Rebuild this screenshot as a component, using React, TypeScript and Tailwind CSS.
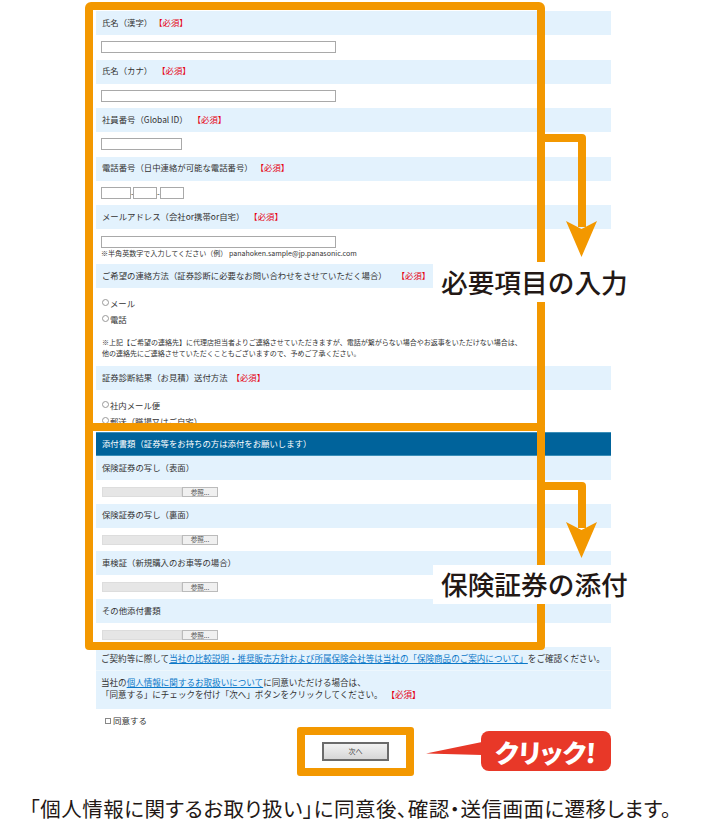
import React from "react";

const cjk = "font-['Noto_Sans_CJK_JP','Noto_Sans_CJK_SC',sans-serif]";

function Req() {
  return <span className="text-[#e60012]">【必須】</span>;
}

function Bar({ children, className = "" }: { children: React.ReactNode; className?: string }) {
  return (
    <div className={`h-[24px] bg-[#e3f2fd] flex items-center pl-[6px] pb-[2px] text-[8.4px] text-[#333] whitespace-nowrap ${className}`}>
      {children}
    </div>
  );
}

function TextField({ w }: { w: string }) {
  return <input type="text" className={`${w} h-[12px] block bg-white border border-[#a9a9a9]`} />;
}

function Radio({ label }: { label: string }) {
  return (
    <div className="flex items-center h-[16px] text-[8.4px] text-[#333]">
      <input type="radio" className="appearance-none w-[7px] h-[7px] rounded-full border border-[#999] mr-[1px] -translate-y-[1px]" />
      {label}
    </div>
  );
}

function FileRow() {
  return (
    <div className="h-[23.7px] flex items-center pl-[6px]">
      <div className="w-[80px] h-[10px] bg-[#e6e6e6] border border-[#ddd]" />
      <button className="w-[36px] h-[10px] bg-[#f0f0f0] border border-[#bbb] text-[6.5px] leading-none text-[#555] flex items-center justify-center">
        参照...
      </button>
    </div>
  );
}

function Arrow({ top, height }: { top: string; height: number }) {
  return (
    <svg
      className={`absolute left-[545px] ${top}`}
      width="54"
      height={height}
      viewBox={`0 0 54 ${height}`}
    >
      <path d={`M0 4H37V${height - 30}`} fill="none" stroke="#f39800" strokeWidth="8" strokeLinejoin="round" />
      <path d={`M21 ${height - 36}L36.5 ${height - 28}L52 ${height - 36}L36.5 ${height}Z`} fill="#f39800" />
    </svg>
  );
}

export default function App() {
  return (
    <div className={`relative w-[701px] h-[832px] overflow-hidden bg-white ${cjk}`}>
      <div className="ml-[96px] w-[515px] pt-[11px]">
        {/* Section 1 */}
        <div className="h-[412px] overflow-hidden">
          <Bar>氏名&#xFF08;漢字&#xFF09;<span className="ml-[2px]"><Req /></span></Bar>
          <div className="h-[24.5px] pl-[5px] pt-[6px]"><TextField w="w-[235px]" /></div>
          <Bar>氏名&#xFF08;カナ&#xFF09;<span className="ml-[5px]"><Req /></span></Bar>
          <div className="h-[24.5px] pl-[5px] pt-[6px]"><TextField w="w-[235px]" /></div>
          <Bar>社員番号&#xFF08;Global ID&#xFF09;<span className="ml-[5px]"><Req /></span></Bar>
          <div className="h-[24.5px] pl-[5px] pt-[6px]"><TextField w="w-[81px]" /></div>
          <Bar>電話番号&#xFF08;日中連絡が可能な電話番号&#xFF09;<span className="ml-[3px]"><Req /></span></Bar>
          <div className="h-[24.5px] pl-[5px] pt-[6px] flex items-start text-[8px] leading-[14px] text-[#333]">
            <TextField w="w-[30px]" />
            <span className="w-[2px]">-</span>
            <TextField w="w-[24px]" />
            <span className="w-[3px]">-</span>
            <TextField w="w-[24px]" />
          </div>
          <Bar>メールアドレス&#xFF08;会社or携帯or自宅&#xFF09;<span className="ml-[5px]"><Req /></span></Bar>
          <div className="h-[35px] pl-[5px] pt-[7px]">
            <TextField w="w-[235px]" />
            <p className="text-[7.05px] leading-[11px] text-[#333] whitespace-nowrap">
              ※半角英数字で入力してください&#xFF08;例&#xFF09; panahoken.sample@jp.panasonic.com
            </p>
          </div>
          <Bar>ご希望の連絡方法&#xFF08;証券診断に必要なお問い合わせをさせていただく場合&#xFF09;<span className="ml-[10px]"><Req /></span></Bar>
          <div className="h-[78px] pl-[6px] pt-[7px]">
            <Radio label="メール" />
            <Radio label="電話" />
            <p className="mt-[10px] text-[7px] leading-[11px] text-[#333] whitespace-nowrap">
              ※上記【ご希望の連絡先】に代理店担当者よりご連絡させていただきますが、電話が繋がらない場合やお返事をいただけない場合は、
              <br />
              他の連絡先にご連絡させていただくこともございますので、予めご了承ください。
            </p>
          </div>
          <Bar>証券診断結果&#xFF08;お見積&#xFF09;送付方法<span className="ml-[4px]"><Req /></span></Bar>
          <div className="pl-[6px] pt-[7px]">
            <Radio label="社内メール便" />
            <Radio label={"郵送\uFF08職場又はご自宅\uFF09"} />
          </div>
        </div>

        {/* Section 2 */}
        <div className="mt-[9px]">
          <div className="h-[24px] bg-[#00639b] flex items-center pl-[6px] pb-[2px] text-[8.4px] text-white border-y border-[#3b8fb8]">
            添付書類&#xFF08;証券等をお持ちの方は添付をお願いします&#xFF09;
          </div>
          <Bar>保険証券の写し&#xFF08;表面&#xFF09;</Bar>
          <FileRow />
          <Bar>保険証券の写し&#xFF08;裏面&#xFF09;</Bar>
          <FileRow />
          <Bar>車検証&#xFF08;新規購入のお車等の場合&#xFF09;</Bar>
          <FileRow />
          <Bar>その他添付書類</Bar>
          <FileRow />
        </div>

        {/* Agreement */}
        <div className="bg-[#e3f2fd] text-[8.55px] text-[#333]">
          <div className="h-[24px] flex items-center pl-[5px] whitespace-nowrap border-b border-[#eef7fd]">
            ご契約等に際して<a className="text-[#0b78c8] underline">当社の比較説明・推奨販売方針および所属保険会社等は当社の「保険商品のご案内について」</a>をご確認ください。
          </div>
          <div className="h-[38px] pl-[5px] pt-[5px] leading-[12px] whitespace-nowrap">
            当社の<a className="text-[#0b78c8] underline">個人情報に関するお取扱いについて</a>に同意いただける場合は、
            <br />
            「同意する」にチェックを付け「次へ」ボタンをクリックしてください。 <span className="ml-[2px]"><Req /></span>
          </div>
        </div>
        <div className="h-[24px] flex items-center pl-[9px] text-[8.5px] text-[#333]">
          <input type="checkbox" className="appearance-none w-[6px] h-[6px] border border-[#888] mr-[2px]" />
          同意する
        </div>
      </div>

      {/* Button + callout */}
      <div className="mt-[-6px] pl-[297px] flex items-center">
        <div className="w-[117px] h-[49px] border-[8px] border-[#f39800] rounded-[3px] flex items-center justify-center">
          <button className="w-[67px] h-[19px] bg-gradient-to-b from-[#f2f2f2] to-[#d6d6d6] border-2 border-[#6b6b6b] text-[7px] text-[#444]">次へ</button>
        </div>
        <svg className="ml-[12px] -translate-y-[2px]" width="56" height="14" viewBox="0 0 56 14">
          <path d="M0 11.5L56 0V13Z" fill="#e83828" />
        </svg>
        <div className="w-[130px] h-[40px] -translate-x-[1px] bg-[#e83828] rounded-[8px] flex items-center justify-center text-white text-[26px] font-black whitespace-nowrap">
          <span className="inline-block -skew-x-3 [font-feature-settings:'palt']">クリック!</span>
        </div>
      </div>

      <p className="mt-[18px] text-center text-[20.5px] tracking-[0.5px] leading-[28px] text-[#231815] whitespace-nowrap [font-feature-settings:'palt']">
        「個人情報に関するお取り扱い」に同意後、確認・送信画面に遷移します。
      </p>

      {/* Orange overlays */}
      <div className="absolute left-[85px] top-[2px] w-[460px] h-[429px] border-[8px] border-[#f39800] rounded-[6px] pointer-events-none" />
      <div className="absolute left-[85px] top-[423px] w-[460px] h-[227px] border-[8px] border-[#f39800] rounded-[4px] pointer-events-none" />
      <Arrow top="top-[134px]" height={123} />
      <Arrow top="top-[482px]" height={76} />

      <div className="absolute left-[433px] top-[262px] w-[202px] h-[40px] bg-white flex items-center pl-[8px] text-[26.7px] font-medium text-[#231815] whitespace-nowrap">
        必要項目の入力
      </div>
      <div className="absolute left-[433px] top-[565px] w-[202px] h-[39px] bg-white flex items-center pl-[8px] text-[26.7px] font-medium text-[#231815] whitespace-nowrap">
        保険証券の添付
      </div>
    </div>
  );
}
